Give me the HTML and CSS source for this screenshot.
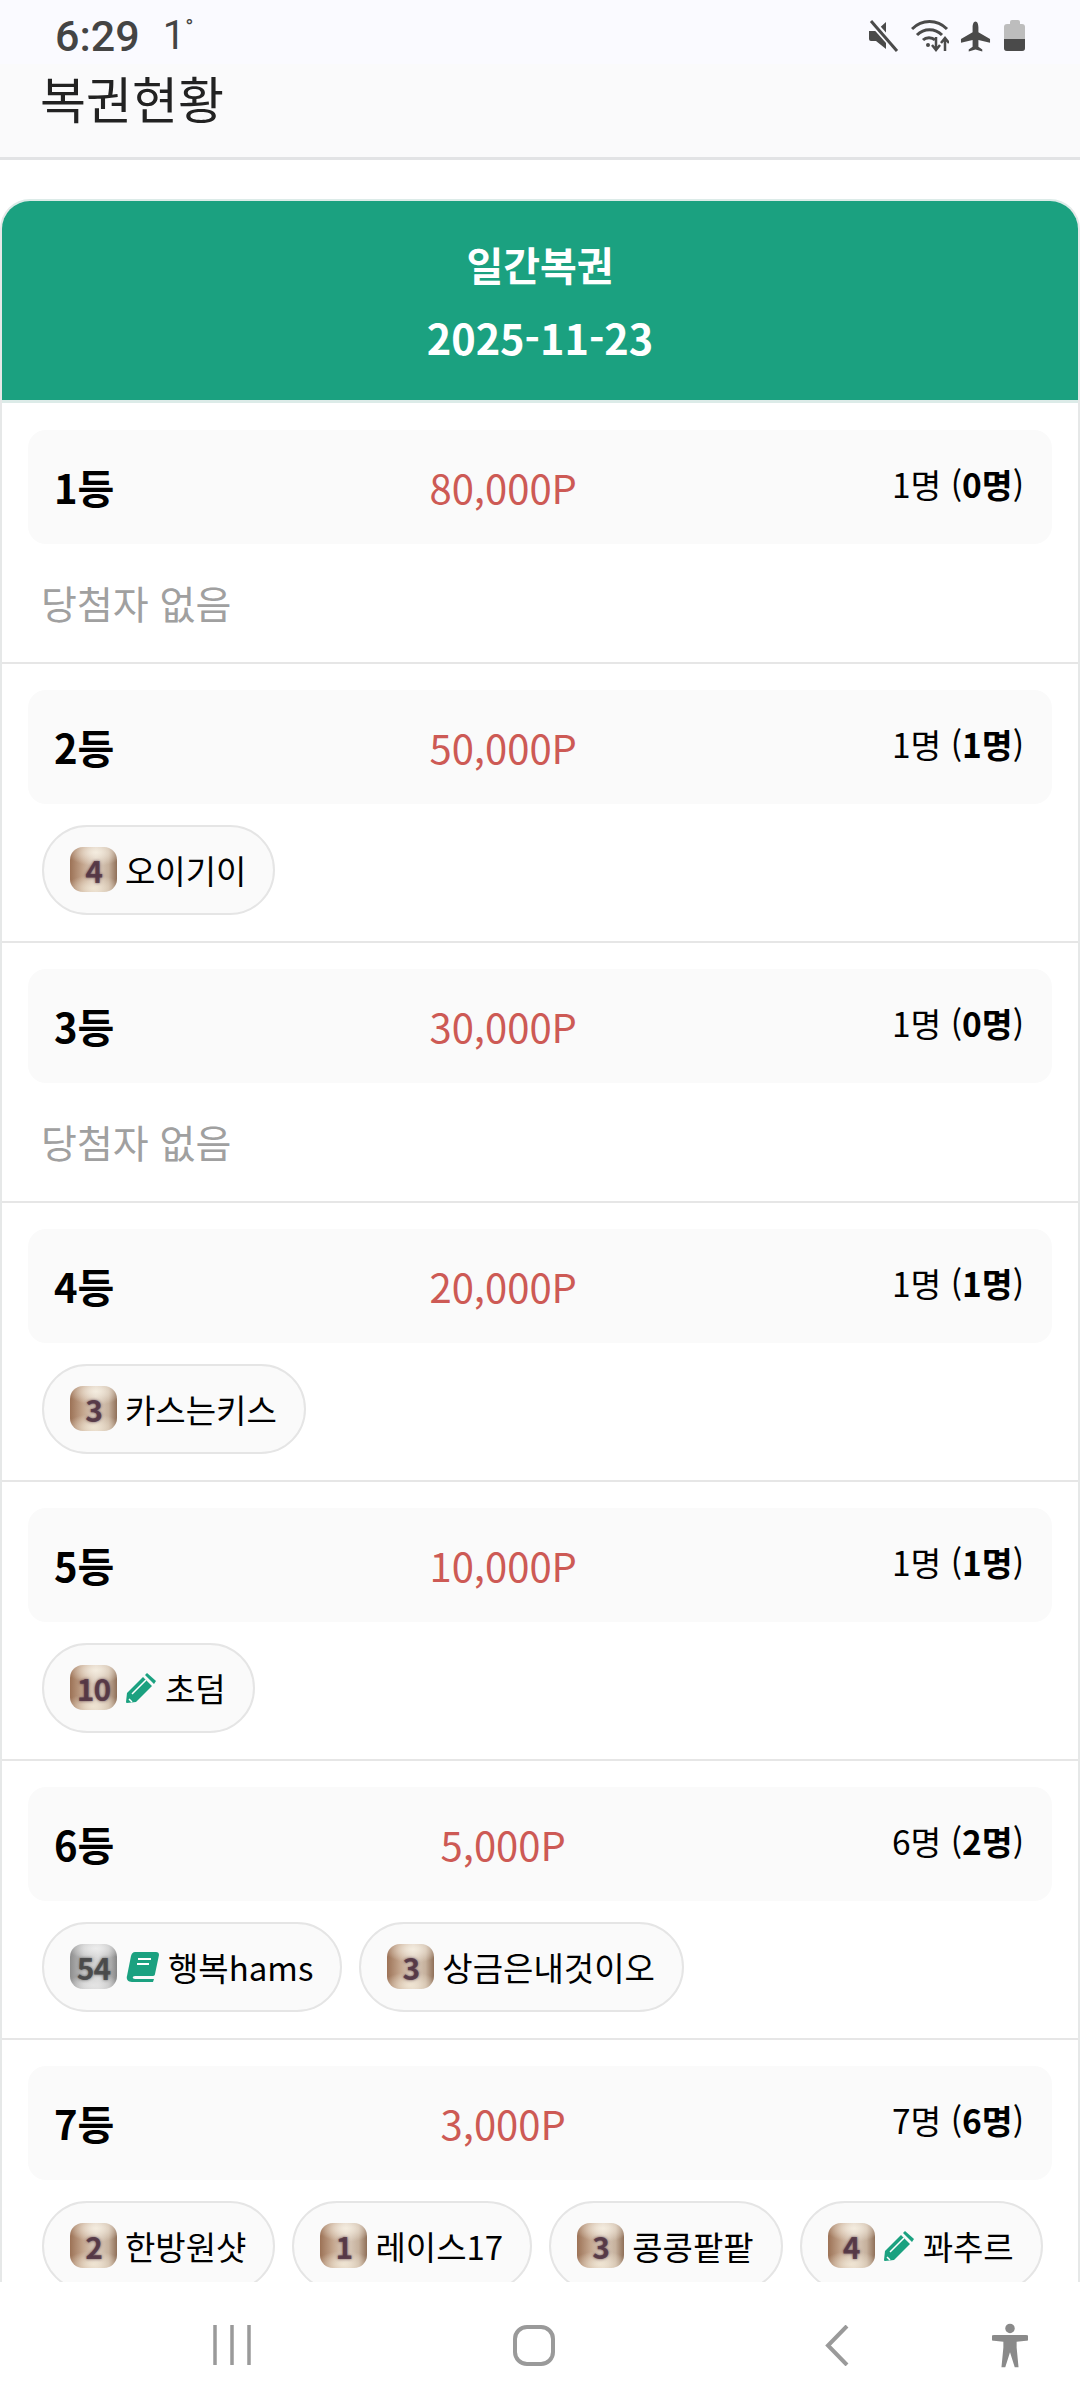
FILE: index.html
```html
<!DOCTYPE html>
<html lang="ko">
<head>
  <meta charset="UTF-8" />
  <meta name="viewport" content="width=device-width, initial-scale=1.0"/>
  <title>복권현황</title>
  <link rel="stylesheet" href="styles.css">
</head>
<body>

  <!-- 상태바 -->
  <div class="status-bar">
    <div class="status-left"><span class="clock">6:29</span><span class="temp">1<sup>°</sup></span></div>
    <div class="status-icons">
      <svg width="31" height="32" viewBox="0 0 31 32"><path d="M0 11h7l10-9v27L7 21H2a2 2 0 0 1-2-2z" fill="#4a4a4a"/><path d="M2 1l26 29" stroke="#fafaff" stroke-width="7"/><path d="M2 1l26 30" stroke="#4a4a4a" stroke-width="3"/></svg>
      <svg width="38" height="32" viewBox="0 0 38 32" fill="none" stroke="#4a4a4a" stroke-width="3"><path d="M1 9c10-10 25-10 35 0"/><path d="M6 15c7-7 18-7 25 0"/><path d="M12 20c3-3 9-3 12 0"/><circle cx="17" cy="25" r="2" fill="#4a4a4a" stroke="none"/><path d="M25 17v13m-4-5l4 5 4-5" stroke-width="2.500"/><path d="M34 31V18m-4 5l4-5 4 5" stroke-width="2.500"/></svg>
      <svg width="31" height="32" viewBox="0 0 32 32"><path d="M16 1c2 0 3 3 3 6v5l12 7v4l-12-3v7l4 3v2l-7-2-7 2v-2l4-3v-7L1 23v-4l12-7V7c0-3 1-6 3-6z" fill="#4a4a4a"/></svg>
      <div class="battery"><div class="battery-cap"></div><div class="battery-body"><div class="battery-fill"></div></div></div>
    </div>
  </div>

  <div class="app-bar">복권현황</div>

  <main class="content">
    <section class="lotto-card">
      <header class="lotto-head">
        <div>일간복권</div>
        <div class="lotto-date">2025-11-23</div>
      </header>

      <div class="prize-row">
        <div class="prize-bar">
          <span class="rank">1등</span><span class="amount">80,000P</span><span class="count">1명 (<b>0명</b>)</span>
        </div>
        <p class="no-winner">당첨자 없음</p>
      </div>

      <div class="prize-row">
        <div class="prize-bar">
          <span class="rank">2등</span><span class="amount">50,000P</span><span class="count">1명 (<b>1명</b>)</span>
        </div>
        <div class="chips">
          <span class="chip"><i class="level">4</i>오이기이</span>
        </div>
      </div>

      <div class="prize-row">
        <div class="prize-bar">
          <span class="rank">3등</span><span class="amount">30,000P</span><span class="count">1명 (<b>0명</b>)</span>
        </div>
        <p class="no-winner">당첨자 없음</p>
      </div>

      <div class="prize-row">
        <div class="prize-bar">
          <span class="rank">4등</span><span class="amount">20,000P</span><span class="count">1명 (<b>1명</b>)</span>
        </div>
        <div class="chips">
          <span class="chip"><i class="level">3</i>카스는키스</span>
        </div>
      </div>

      <div class="prize-row">
        <div class="prize-bar">
          <span class="rank">5등</span><span class="amount">10,000P</span><span class="count">1명 (<b>1명</b>)</span>
        </div>
        <div class="chips">
          <span class="chip"><i class="level">10</i><svg class="tag" width="30" height="30" viewBox="0 0 30 30"><path d="M1 20L17 4l9 9L10 29l-9 1a1 1 0 0 1-1-1zM19 2l2-2 9 8-2 3z" fill="#1ba180"/><path d="M6 21L20 7M3 26l3 3" stroke="#fff" stroke-width="1.500"/></svg>초덤</span>
        </div>
      </div>

      <div class="prize-row">
        <div class="prize-bar">
          <span class="rank">6등</span><span class="amount">5,000P</span><span class="count">6명 (<b>2명</b>)</span>
        </div>
        <div class="chips">
          <span class="chip"><i class="level silver">54</i><svg class="tag" width="33" height="30" viewBox="0 0 33 30"><path d="M9 0h21c2 0 3 1 3 3l-4 19c0 1-1 2-2 2H9c-3 0-3 3 0 3h19l-1 3H6c-4 0-6-3-5-6L5 4c1-3 2-4 4-4z" fill="#1ba180"/><path d="M12 7h13M11 12h12" stroke="#fff" stroke-width="2.200"/></svg>행복hams</span>
          <span class="chip"><i class="level">3</i>상금은내것이오</span>
        </div>
      </div>

      <div class="prize-row">
        <div class="prize-bar">
          <span class="rank">7등</span><span class="amount">3,000P</span><span class="count">7명 (<b>6명</b>)</span>
        </div>
        <div class="chips">
          <span class="chip"><i class="level">2</i>한방원샷</span>
          <span class="chip"><i class="level">1</i>레이스17</span>
          <span class="chip"><i class="level">3</i>콩콩팥팥</span>
          <span class="chip"><i class="level">4</i><svg class="tag" width="30" height="30" viewBox="0 0 30 30"><path d="M1 20L17 4l9 9L10 29l-9 1a1 1 0 0 1-1-1zM19 2l2-2 9 8-2 3z" fill="#1ba180"/><path d="M6 21L20 7M3 26l3 3" stroke="#fff" stroke-width="1.500"/></svg>꽈추르</span>
        </div>
      </div>
    </section>
  </main>

  <!-- 하단 내비게이션 -->
  <nav class="nav-bar">
    <svg class="nav-recent" width="38" height="40" viewBox="0 0 38 40" stroke="#9a9a9a" stroke-width="3.500"><path d="M2 0v40M19 0v40M36 0v40"/></svg>
    <svg class="nav-home" width="42" height="41" viewBox="0 0 42 41" fill="none" stroke="#9a9a9a" stroke-width="4"><rect x="2" y="2" width="38" height="37" rx="12"/></svg>
    <svg class="nav-back" width="24" height="41" viewBox="0 0 24 41" fill="none" stroke="#9a9a9a" stroke-width="4"><path d="M22 1L3 20.500 22 40"/></svg>
    <svg class="nav-access" width="36" height="45" viewBox="0 0 38 46" fill="#8a8a8a"><circle cx="19" cy="5" r="5"/><path d="M2 12h34a2.500 2.500 0 0 1 0 6l-10 1v6l2 21h-4l-5-16-5 16h-4l2-21v-6L2 18a2.500 2.500 0 0 1 0-6z"/></svg>
  </nav>

</body>
</html>
```

FILE: styles.css
```css
* {
  box-sizing: border-box;
}

body {
  margin: 0;
  width: 1080px;
  height: 2408px;
  display: flex;
  flex-direction: column;
  overflow: hidden;
  background-color: #fff;
  color: #000;
  font-family: "Noto Sans CJK KR", "Noto Sans", sans-serif;
}

.status-bar {
  height: 64px;
  flex: none;
  padding: 11px 55px 0 55px;
  display: flex;
  justify-content: space-between;
  background-color: #fafaff;
  color: #444;
  font-family: Roboto, sans-serif;
}

.status-left {
  display: flex;
  gap: 23px;
  font-size: 43px;
  line-height: 50px;
}

.clock {
  font-weight: 500;
}

.temp {
  font-size: 40px;
}

.temp sup {
  font-size: 22px;
  line-height: 0;
}

.status-icons {
  display: flex;
  align-items: flex-start;
  gap: 11px;
  padding-top: 9px;
}

.battery {
  width: 21px;
  margin-left: 2px;
}

.battery-cap {
  width: 10px;
  height: 4px;
  margin: 0 auto;
  background-color: #bdbdbd;
  border-radius: 2px 2px 0 0;
}

.battery-body {
  height: 27px;
  background-color: #bdbdbd;
  border-radius: 3px;
  display: flex;
  align-items: flex-end;
  overflow: hidden;
}

.battery-fill {
  width: 100%;
  height: 12px;
  background-color: #4a4a4a;
}

.app-bar {
  height: 96px;
  flex: none;
  padding-left: 40px;
  font-size: 50px;
  line-height: 66px;
  color: #222;
  background-color: #fafafb;
  border-bottom: 3px solid #e2e3e5;
}

.content {
  flex: 1;
  min-height: 0;
  overflow: hidden;
  padding-top: 39px;
}

.lotto-card {
  border: 2px solid #e6e8e8;
  border-top-color: #dcebe8;
  border-bottom: none;
  border-radius: 30px 30px 0 0;
  overflow: hidden;
}

.lotto-head {
  height: 202px;
  padding-top: 27px;
  background-color: #1ba180;
  color: #fff;
  font-size: 40px;
  font-weight: 700;
  line-height: 73px;
  text-align: center;
  border-bottom: 3px solid #dcebe8;
}

.lotto-date {
  font-size: 41.500px;
}

.prize-row {
  padding: 26px 26px 0;
  border-bottom: 2px solid #e6e6e6;
}

.lotto-head + .prize-row {
  padding-top: 26.500px;
}

.prize-bar {
  height: 114px;
  padding: 0 28px 0 26px;
  display: flex;
  justify-content: space-between;
  align-items: center;
  background-color: #fafafa;
  border-radius: 18px;
}

.rank {
  font-size: 40px;
  font-weight: 700;
}

.amount {
  font-size: 40px;
  color: #cd5a55;
}

.count {
  font-size: 33.500px;
  margin-top: -6px;
}

.count b {
  font-weight: 700;
}

.no-winner {
  margin: 0;
  padding: 25px 0 27px 13px;
  font-size: 39px;
  line-height: 66px;
  color: #a0a0a0;
}

.chips {
  display: flex;
  gap: 17px;
  padding: 21px 0 26px 14px;
}

.chip {
  height: 90px;
  padding: 0 27px 0 26px;
  display: flex;
  align-items: center;
  flex: none;
  font-size: 33px;
  white-space: nowrap;
  background-color: #fafafa;
  border: 2px solid #e5e5e5;
  border-radius: 45px;
}

/* 레벨 배지: 원본은 이미지라서 그라데이션으로 금속 느낌만 낸다 */
.level {
  width: 47px;
  height: 45px;
  margin-right: 8px;
  display: flex;
  align-items: center;
  justify-content: center;
  font-style: normal;
  font-size: 30px;
  font-weight: 700;
  letter-spacing: -1px;
  color: rgba(80, 50, 65, 0.85);
  text-shadow: 0 0 3px rgba(80, 50, 65, 0.8);
  border-radius: 13px;
  background:
    radial-gradient(ellipse 60% 30% at 55% 12%, #f4ecdf, transparent),
    radial-gradient(ellipse 60% 30% at 50% 92%, #efe4d2, transparent),
    linear-gradient(90deg, #9c7256 0%, #c4a68e 28%, #ddcfc1 55%, #c6b19d 82%, #8f6f58 100%);
}

.level.silver {
  color: rgba(70, 70, 70, 0.9);
  text-shadow: 0 0 3px rgba(70, 70, 70, 0.8);
  background:
    radial-gradient(ellipse 60% 25% at 55% 10%, #ececec, transparent),
    radial-gradient(ellipse 60% 25% at 50% 92%, #e4e4e4, transparent),
    linear-gradient(90deg, #8e8e8e 0%, #c4c4c4 30%, #d6d6d6 60%, #bbb 82%, #858585 100%);
}

.tag {
  margin: 0 9px 0 1px;
  flex: none;
}

.nav-bar {
  height: 126px;
  flex: none;
  padding: 43px 0 0 213px;
  display: flex;
  align-items: flex-start;
  background-color: #fff;
}

.nav-home {
  margin-left: 262px;
}

.nav-back {
  margin-left: 270px;
}

.nav-access {
  margin: -2px 0 0 143px;
}
```
